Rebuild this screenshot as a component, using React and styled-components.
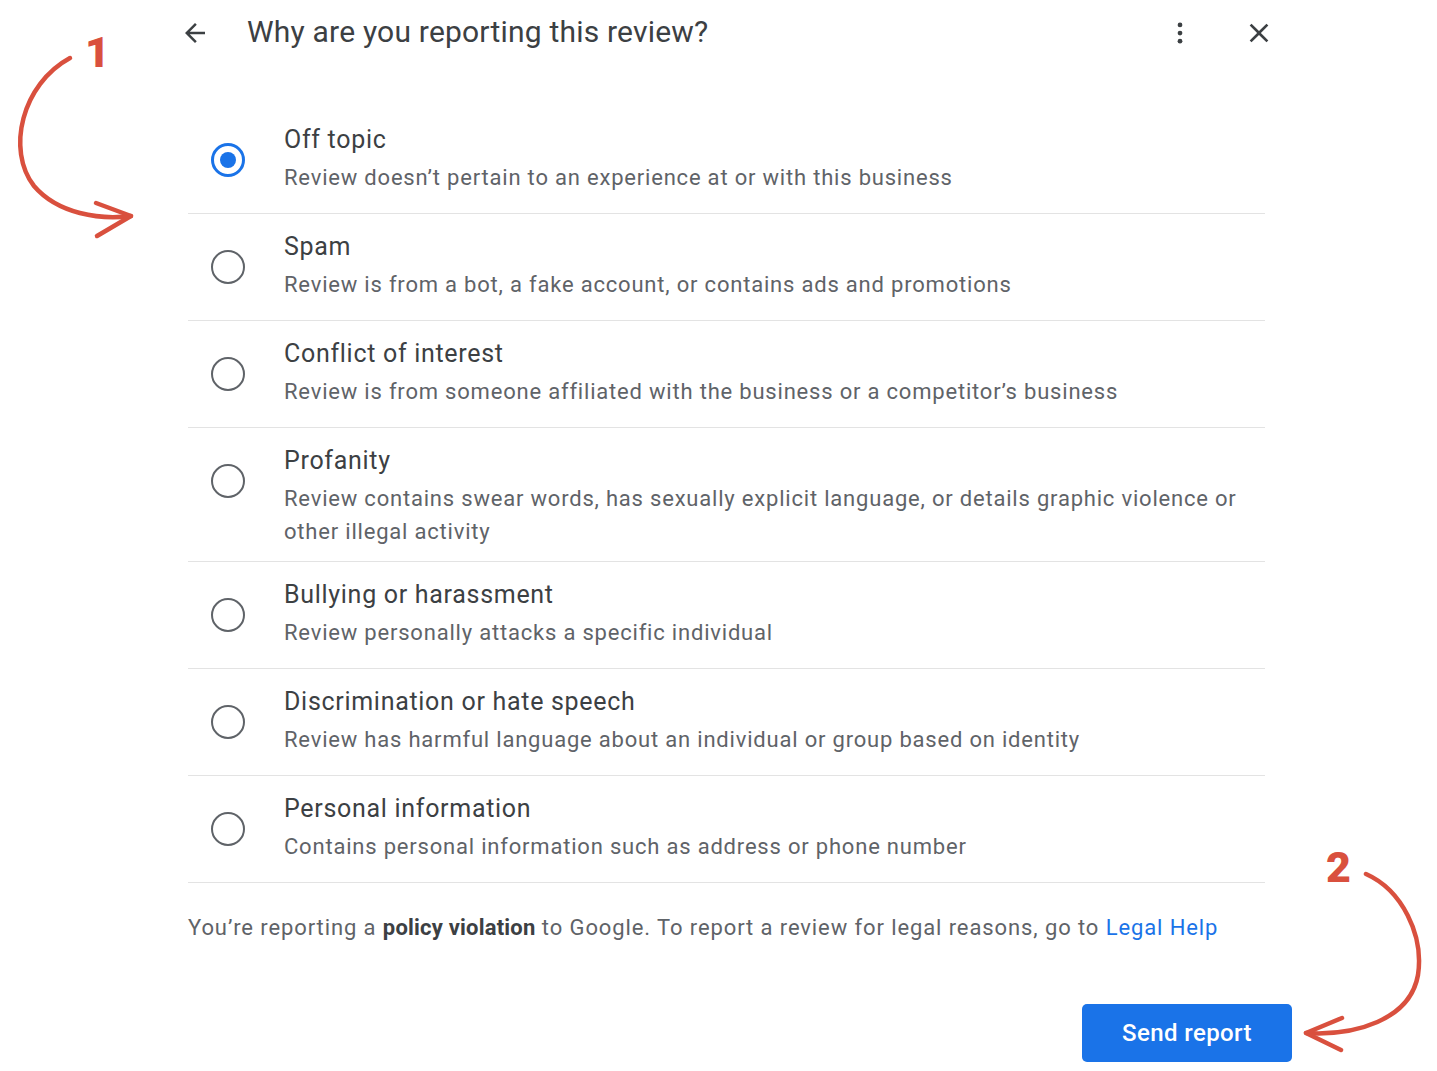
import React, { useState } from 'react';
import styled, { createGlobalStyle } from 'styled-components';

const options = [
  { title: 'Off topic', desc: 'Review doesn’t pertain to an experience at or with this business' },
  { title: 'Spam', desc: 'Review is from a bot, a fake account, or contains ads and promotions' },
  { title: 'Conflict of interest', desc: 'Review is from someone affiliated with the business or a competitor’s business' },
  { title: 'Profanity', desc: 'Review contains swear words, has sexually explicit language, or details graphic violence or other illegal activity' },
  { title: 'Bullying or harassment', desc: 'Review personally attacks a specific individual' },
  { title: 'Discrimination or hate speech', desc: 'Review has harmful language about an individual or group based on identity' },
  { title: 'Personal information', desc: 'Contains personal information such as address or phone number' },
];

const App = () => {
  const [selected, setSelected] = useState(0);
  return (
    <Page>
      <GlobalStyle />
      <Dialog>
        <Header>
          <IconButton aria-label="Back">
            <svg width="30" height="30" viewBox="0 0 24 24">
              <path d="M20 11H7.83l5.59-5.59L12 4l-8 8 8 8 1.41-1.41L7.83 13H20v-2z" fill="#3c4043" />
            </svg>
          </IconButton>
          <Title>Why are you reporting this review?</Title>
          <HeaderActions>
            <IconButton aria-label="More">
              <svg width="30" height="30" viewBox="0 0 24 24">
                <circle cx="12" cy="5.5" r="1.9" fill="#3c4043" />
                <circle cx="12" cy="12" r="1.9" fill="#3c4043" />
                <circle cx="12" cy="18.5" r="1.9" fill="#3c4043" />
              </svg>
            </IconButton>
            <IconButton aria-label="Close">
              <svg width="32" height="32" viewBox="0 0 24 24">
                <path d="M19 6.41 17.59 5 12 10.59 6.41 5 5 6.41 10.59 12 5 17.59 6.41 19 12 13.41 17.59 19 19 17.59 13.41 12z" fill="#3c4043" />
              </svg>
            </IconButton>
          </HeaderActions>
        </Header>

        <OptionList>
          {options.map((o, i) => (
            <Option key={o.title} onClick={() => setSelected(i)}>
              <Radio checked={selected === i} />
              <OptionText>
                <OptionTitle>{o.title}</OptionTitle>
                <OptionDesc>{o.desc}</OptionDesc>
              </OptionText>
            </Option>
          ))}
        </OptionList>

        <Notice>
          You’re reporting a <b>policy violation</b> to Google. To report a review for legal reasons, go to{' '}
          <LegalLink href="#">Legal Help</LegalLink>
        </Notice>

        <Footer>
          <SendButton>Send report</SendButton>
        </Footer>
      </Dialog>

      <Marker $x={85} $y={31}>1</Marker>
      <Annotation width="1437" height="1071" viewBox="0 0 1437 1071">
        <g fill="none" stroke="#d9503e" strokeWidth="4.5" strokeLinecap="round" strokeLinejoin="round">
          <path d="M70 58 C 22 84, 6 150, 34 186 C 58 214, 100 220, 131 216" />
          <path d="M96 203 L131 216 L97 236" />
        </g>
      </Annotation>
      <Marker $x={1326} $y={846}>2</Marker>
      <Annotation width="1437" height="1071" viewBox="0 0 1437 1071">
        <g fill="none" stroke="#d9503e" strokeWidth="4.5" strokeLinecap="round" strokeLinejoin="round">
          <path d="M1366 874 C 1402 890, 1424 935, 1418 975 C 1410 1020, 1355 1036, 1306 1033" />
          <path d="M1342 1018 L1306 1033 L1341 1050" />
        </g>
      </Annotation>
    </Page>
  );
};
export default App;

const GlobalStyle = createGlobalStyle`
  html, body {
    margin: 0;
    padding: 0;
    background: #ffffff;
  }
  body {
    font-family: Roboto, "Liberation Sans", Arial, sans-serif;
    color: #3c4043;
  }
`;
const Page = styled.div`
  position: relative;
  width: 1437px;
  height: 1071px;
  overflow: hidden;
  background: #fff;
`;
const Dialog = styled.div`
  margin-left: 180px;
  width: 1112px;
  display: flex;
  flex-direction: column;
`;
const Header = styled.div`
  height: 66px;
  display: flex;
  align-items: center;
`;
const IconButton = styled.button`
  border: 0;
  background: none;
  padding: 0;
  display: flex;
  align-items: center;
  justify-content: center;
  cursor: pointer;
`;
const Title = styled.h1`
  margin: 0 0 3px 37px;
  flex: 1;
  font-size: 30px;
  line-height: 36px;
  font-weight: 400;
  color: #3c4043;
  letter-spacing: 0.2px;
`;
const HeaderActions = styled.div`
  display: flex;
  align-items: center;
  gap: 48px;
  margin-right: 17px;
`;
const OptionList = styled.div`
  margin: 41px 0 0 8px;
  width: 1077px;
`;
const Option = styled.label`
  display: flex;
  align-items: flex-start;
  min-height: 107px;
  box-sizing: border-box;
  padding: 17px 0 13px;
  border-bottom: 1.5px solid #e3e3e3;
  cursor: pointer;
`;
const Radio = styled.span`
  flex: none;
  box-sizing: border-box;
  width: 34px;
  height: 34px;
  margin: 19px 0 0 23px;
  border-radius: 50%;
  border: ${p => (p.checked ? '3.5px solid #1a73e8' : '2.5px solid #5f6368')};
  display: flex;
  align-items: center;
  justify-content: center;
  &::after {
    content: '';
    width: 16px;
    height: 16px;
    border-radius: 50%;
    background: #1a73e8;
    display: ${p => (p.checked ? 'block' : 'none')};
  }
`;
const OptionText = styled.div`
  margin-left: 39px;
  display: flex;
  flex-direction: column;
`;
const OptionTitle = styled.div`
  font-size: 25px;
  line-height: 32px;
  color: #3c4043;
  letter-spacing: 0.7px;
`;
const OptionDesc = styled.div`
  margin-top: 5px;
  font-size: 22px;
  line-height: 33px;
  color: #5f6368;
  letter-spacing: 0.8px;
`;
const Notice = styled.p`
  margin: 28px 0 0 8px;
  font-size: 22px;
  line-height: 34px;
  color: #5f6368;
  letter-spacing: 0.9px;
  b {
    color: #3c4043;
    font-weight: 700;
    letter-spacing: 0.2px;
  }
`;
const LegalLink = styled.a`
  color: #1a73e8;
  text-decoration: none;
`;
const Footer = styled.div`
  display: flex;
  justify-content: flex-end;
  margin-top: 59px;
`;
const SendButton = styled.button`
  width: 210px;
  height: 58px;
  border: 0;
  border-radius: 5px;
  background: #1a73e8;
  color: #fff;
  font-family: Roboto, "Liberation Sans", Arial, sans-serif;
  font-size: 24px;
  font-weight: 500;
  letter-spacing: 0.4px;
  cursor: pointer;
`;
const Annotation = styled.svg`
  position: absolute;
  left: 0;
  top: 0;
  pointer-events: none;
`;
const Marker = styled.span`
  position: absolute;
  left: ${p => p.$x}px;
  top: ${p => p.$y}px;
  font-family: Roboto, "Liberation Sans", Arial, sans-serif;
  font-size: 43px;
  font-weight: 900;
  line-height: 1;
  color: #d9503e;
`;
